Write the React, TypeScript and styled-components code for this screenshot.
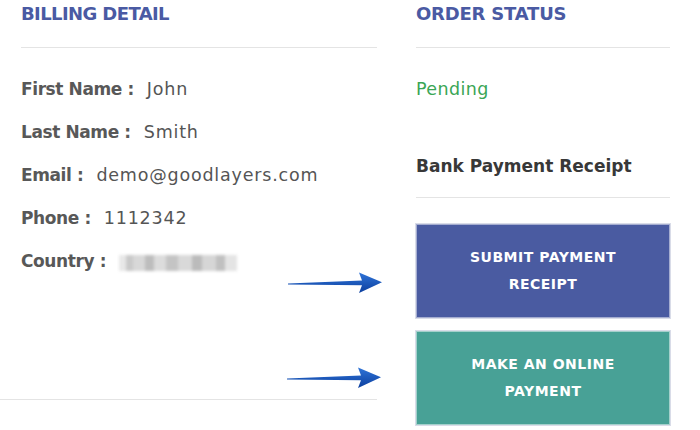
import React from "react";
import styled, { createGlobalStyle } from "styled-components";

const FONT = `"DejaVu Sans", "Open Sans", sans-serif`;

const Global = createGlobalStyle`
  html, body { margin: 0; padding: 0; background: #fff; }
  body { font-family: ${FONT}; }
`;

const Page = styled.div`
  position: relative;
  width: 700px;
  height: 430px;
  overflow: hidden;
  display: flex;
  gap: 39px;
`;

const LeftCol = styled.div`
  width: 377px;
  display: flex;
  flex-direction: column;
`;

const LeftInner = styled.div`
  padding-left: 21px;
`;

const RightCol = styled.div`
  width: 254px;
  display: flex;
  flex-direction: column;
`;

const Heading = styled.h2<{ $ls: number }>`
  margin: 0;
  padding-top: 2px;
  font-size: 18px;
  line-height: 24px;
  font-weight: 700;
  letter-spacing: ${(p) => p.$ls}px;
  color: #4a5aa3;
  border-bottom: 1px solid #e4e4e4;
  box-sizing: border-box;
  height: 48px;
`;

const Rows = styled.div`
  padding-top: 20px;
  display: flex;
  flex-direction: column;
  height: 351px;
  box-sizing: border-box;
`;

const Row = styled.div`
  height: 43px;
  line-height: 43px;
  font-size: 17px;
  color: #555;
  display: flex;
  align-items: center;
`;

const Label = styled.span`
  font-weight: 700;
  color: #585858;
  letter-spacing: -0.4px;
  margin-right: 13px;
  white-space: pre;
`;

const Value = styled.span`
  font-weight: 400;
  font-size: 17.5px;
  color: #555;
  letter-spacing: 0.8px;
`;

const Blur = styled.span`
  display: inline-block;
  width: 118px;
  height: 16px;
  margin-top: 3px;
  filter: blur(1.5px);
  background:
    linear-gradient(90deg, #e8e8e8 0 6%, #c9c9c9 6% 12%, #d8d8d8 12% 22%, #bdbdbd 22% 30%, #dcdcdc 30% 40%, #c4c4c4 40% 50%, #d9d9d9 50% 62%, #bbbbbb 62% 70%, #d6d6d6 70% 82%, #c0c0c0 82% 90%, #e4e4e4 90% 100%);
`;

const BottomRule = styled.div`
  width: 377px;
  border-bottom: 1px solid #e4e4e4;
`;

const Status = styled.div`
  padding-top: 20px;
  height: 43px;
  line-height: 43px;
  font-size: 17.5px;
  letter-spacing: 0.4px;
  color: #3aa655;
`;

const SubHeading = styled.div`
  margin-top: 43px;
  height: 44px;
  line-height: 24px;
  font-size: 17px;
  font-weight: 700;
  color: #383838;
  border-bottom: 1px solid #e4e4e4;
  box-sizing: border-box;
`;

const Buttons = styled.div`
  margin-top: 26px;
  display: flex;
  flex-direction: column;
  gap: 13px;
`;

const ActionButton = styled.button<{ $bg: string }>`
  width: 254px;
  height: 94px;
  border: 1px solid rgba(255,255,255,0.5);
  outline: 1px solid #d9dce8;
  background: ${(p) => p.$bg};
  color: #fff;
  font-family: ${FONT};
  font-size: 14px;
  font-weight: 700;
  letter-spacing: 0.5px;
  line-height: 27px;
  padding: 0 30px;
  text-align: center;
`;

const ArrowWrap = styled.svg<{ $x: number; $y: number }>`
  position: absolute;
  left: ${(p) => p.$x}px;
  top: ${(p) => p.$y}px;
`;

function Arrow({ x, y }: { x: number; y: number }) {
  return (
    <ArrowWrap $x={x} $y={y} width="96" height="24" viewBox="0 0 96 24">
      <defs>
        <linearGradient id={`ag${y}`} x1="0" y1="0" x2="0" y2="1">
          <stop offset="0" stopColor="#2f74d8" />
          <stop offset="1" stopColor="#0c3f9e" />
        </linearGradient>
      </defs>
      <path
        d="M0 12.6 L74 9.6 L71 1.5 L94 11.2 L71 22 L74 14.2 L0 13.4 Z"
        fill={`url(#ag${y})`}
      />
    </ArrowWrap>
  );
}

const rows: [string, React.ReactNode][] = [
  ["First Name :", "John"],
  ["Last Name :", "Smith"],
  ["Email :", "demo@goodlayers.com"],
  ["Phone :", "1112342"],
];

export default function App() {
  return (
    <Page>
      <Global />
      <LeftCol>
        <LeftInner>
          <Heading $ls={-0.6}>BILLING DETAIL</Heading>
          <Rows>
            {rows.map(([l, v]) => (
              <Row key={l}>
                <Label>{l}</Label>
                <Value>{v}</Value>
              </Row>
            ))}
            <Row>
              <Label>Country :</Label>
              <Blur />
            </Row>
          </Rows>
        </LeftInner>
        <BottomRule />
      </LeftCol>
      <RightCol>
        <Heading $ls={-0.2}>ORDER STATUS</Heading>
        <Status>Pending</Status>
        <SubHeading>Bank Payment Receipt</SubHeading>
        <Buttons>
          <ActionButton $bg="#4a5ba1">SUBMIT PAYMENT RECEIPT</ActionButton>
          <ActionButton $bg="#48a196">MAKE AN ONLINE PAYMENT</ActionButton>
        </Buttons>
      </RightCol>
      <Arrow x={288} y={271} />
      <Arrow x={287} y={366} />
    </Page>
  );
}
